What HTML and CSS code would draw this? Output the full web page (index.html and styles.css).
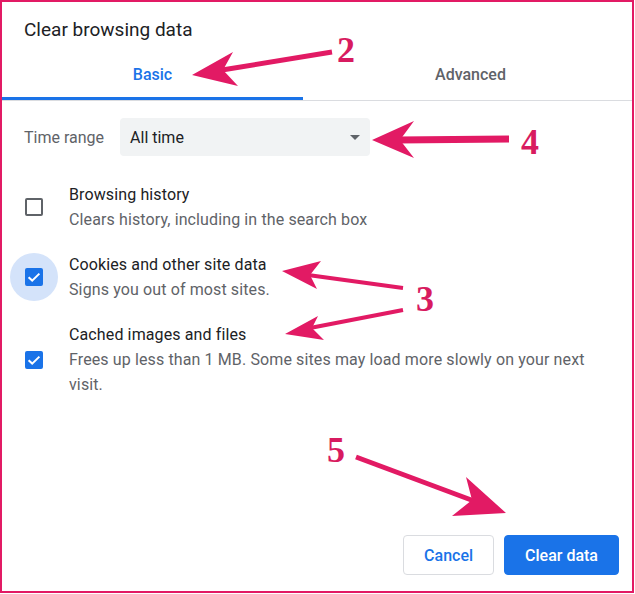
FILE: index.html
```html
<!DOCTYPE html>
<html lang="en">
<head>
<meta charset="utf-8">
<title>Clear browsing data</title>
<link rel="stylesheet" href="styles.css">
</head>
<body>
<div class="dialog">
  <h1 class="title">Clear browsing data</h1>
  <div class="tabs">
    <div class="tab tab-active">Basic</div>
    <div class="tab tab-rest">Advanced</div>
  </div>
  <div class="content">
    <div class="range-row">
      <span class="range-label">Time range</span>
      <div class="select"><span>All time</span><span class="caret"></span></div>
    </div>
    <ul class="options">
      <li class="option">
        <span class="check-wrap"><span class="checkbox"></span></span>
        <div class="option-text">
          <div class="option-title">Browsing history</div>
          <div class="option-sub">Clears history, including in the search box</div>
        </div>
      </li>
      <li class="option">
        <span class="check-wrap focused"><span class="checkbox checked"><svg class="tick" viewBox="0 0 18 18"><path d="M3.6 9.2 L7.2 12.6 L14.4 5.6" /></svg></span></span>
        <div class="option-text">
          <div class="option-title">Cookies and other site data</div>
          <div class="option-sub">Signs you out of most sites.</div>
        </div>
      </li>
      <li class="option">
        <span class="check-wrap"><span class="checkbox checked"><svg class="tick" viewBox="0 0 18 18"><path d="M3.6 9.2 L7.2 12.6 L14.4 5.6" /></svg></span></span>
        <div class="option-text">
          <div class="option-title">Cached images and files</div>
          <div class="option-sub">Frees up less than 1 MB. Some sites may load more slowly on your next visit.</div>
        </div>
      </li>
    </ul>
  </div>
  <div class="footer">
    <button class="btn btn-cancel">Cancel</button>
    <button class="btn btn-primary">Clear data</button>
  </div>
</div>
<svg class="annotations" width="635" height="594" viewBox="0 0 635 594">
  <g class="arrow-lines">
    <line x1="332" y1="52" x2="222" y2="70" stroke-width="5"/>
    <line x1="509" y1="139" x2="398" y2="140" stroke-width="7"/>
    <line x1="403" y1="288" x2="308" y2="275" stroke-width="4"/>
    <line x1="403" y1="310" x2="310" y2="328" stroke-width="4"/>
    <line x1="356" y1="457" x2="474" y2="501" stroke-width="5"/>
  </g>
  <g class="arrow-heads">
    <polygon points="192,75 233,52 223,70 238,86"/>
    <polygon points="372,140 414,121 400,140 414,158"/>
    <polygon points="282,271 321,261 310,275 317,289"/>
    <polygon points="285,334 318,316 312,328 324,340"/>
    <polygon points="506,513 466,477 472,500 452,516"/>
  </g>
  <g class="numbers">
    <text x="337" y="62">2</text>
    <text x="521" y="154">4</text>
    <text x="416" y="311">3</text>
    <text x="327" y="462">5</text>
  </g>
</svg>
</body>
</html>
```
FILE: styles.css
```css
html, body {
  margin: 0;
  padding: 0;
  background: #ffffff;
}

body {
  font-family: Roboto, "Liberation Sans", sans-serif;
  position: relative;
  width: 635px;
  height: 594px;
  overflow: hidden;
}

.dialog {
  box-sizing: border-box;
  width: 634px;
  height: 593px;
  border: 2px solid #e21a64;
  background: #ffffff;
  display: flex;
  flex-direction: column;
}

.title {
  margin: 0;
  padding: 16px 22px 0;
  font-size: 19px;
  font-weight: 400;
  line-height: 24px;
  color: #202124;
}

.tabs {
  display: flex;
  margin-top: 7px;
  border-bottom: 1px solid #dadce0;
}

.tab {
  box-sizing: border-box;
  height: 51px;
  display: flex;
  align-items: center;
  justify-content: center;
  font-size: 16px;
  font-weight: 500;
  color: #5f6368;
}

.tab-active {
  width: 301px;
  color: #1a73e8;
  border-bottom: 3px solid #1a73e8;
  padding-top: 3px;
}

.tab-rest {
  flex: 1;
  padding-left: 6px;
}

.content {
  padding: 17px 22px 0;
}

.range-row {
  display: flex;
  align-items: center;
  gap: 16px;
}

.range-label {
  font-size: 16px;
  color: #5f6368;
}

.select {
  box-sizing: border-box;
  width: 250px;
  height: 38px;
  padding: 0 10px;
  background: #f1f3f4;
  border-radius: 4px;
  display: flex;
  align-items: center;
  justify-content: space-between;
  font-size: 16px;
  color: #202124;
}

.caret {
  width: 0;
  height: 0;
  border-left: 5.5px solid transparent;
  border-right: 5.5px solid transparent;
  border-top: 5.5px solid #5f6368;
  margin-top: 1px;
}

.options {
  list-style: none;
  margin: 26px 0 0;
  padding: 0;
  display: flex;
  flex-direction: column;
  gap: 20px;
}

.option {
  display: flex;
  align-items: center;
  gap: 11px;
}

.check-wrap {
  flex: none;
  width: 48px;
  height: 48px;
  margin-left: -14px;
  border-radius: 50%;
  display: flex;
  align-items: center;
  justify-content: center;
}

.check-wrap.focused {
  background: #d4e3fa;
}

.checkbox {
  box-sizing: border-box;
  width: 18px;
  height: 18px;
  border: 2px solid #5f6368;
  border-radius: 2px;
  display: flex;
  align-items: center;
  justify-content: center;
}

.checkbox.checked {
  background: #1a73e8;
  border-color: #1a73e8;
}

.tick {
  width: 18px;
  height: 18px;
  flex: none;
}

.tick path {
  fill: none;
  stroke: #ffffff;
  stroke-width: 2;
}

.option-text {
  font-size: 16px;
  line-height: 25px;
  letter-spacing: 0.12px;
}

.option-title {
  color: #202124;
}

.option-sub {
  color: #5f6368;
}

.footer {
  margin-top: auto;
  display: flex;
  justify-content: flex-end;
  gap: 10px;
  padding: 0 13px 16px;
}

.btn {
  box-sizing: border-box;
  height: 40px;
  padding: 0 20px;
  border-radius: 4px;
  font-family: Roboto, "Liberation Sans", sans-serif;
  font-size: 16px;
  font-weight: 500;
  cursor: pointer;
}

.btn-cancel {
  background: #ffffff;
  border: 1px solid #dadce0;
  color: #1a73e8;
}

.btn-primary {
  background: #1a73e8;
  border: 1px solid #1a73e8;
  color: #ffffff;
}

.annotations {
  position: absolute;
  left: 0;
  top: 0;
  pointer-events: none;
}

.arrow-lines line {
  stroke: #e21a64;
  stroke-linecap: butt;
}

.arrow-heads polygon {
  fill: #e21a64;
}

.numbers text {
  font-family: "Liberation Serif", "Times New Roman", serif;
  font-weight: bold;
  font-size: 36px;
  fill: #d81b60;
}
```
